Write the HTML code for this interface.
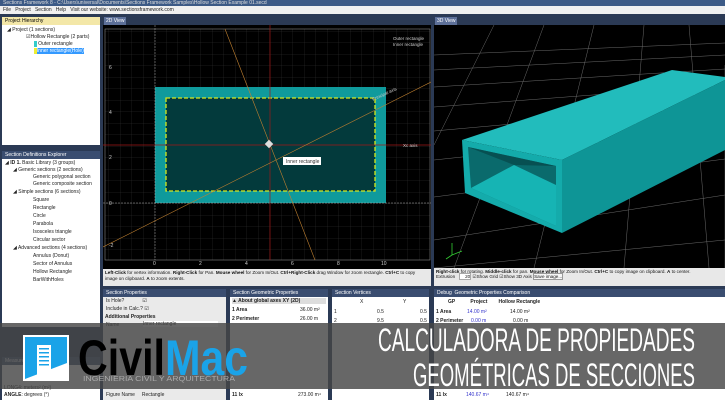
<!DOCTYPE html>
<html><head><meta charset="utf-8"><style>
*{margin:0;padding:0;box-sizing:border-box}
body{width:725px;height:400px;overflow:hidden;background:#2b3a55;font-family:"Liberation Sans",sans-serif;font-size:5px;position:relative}
.a{position:absolute}
.hdr{background:#3a4d70;color:#fff;font-size:5px;line-height:8px;padding-left:3px}
.hdrY{background:#f3e7a8;color:#000;font-size:5px;line-height:8px;padding-left:3px}
.w{background:#fff}
.t{font-size:5px;color:#222;white-space:nowrap}
</style></head><body>
<div class="a" style="left:0;top:0;width:725px;height:6px;background:#3c5a86"></div>
<div class="a t" style="left:3px;top:0;color:#ddd;font-size:5px">Sections Framework 8 - C:\Users\universal\Documents\Sections Framework Samples\Hollow Section Example 01.secd</div>
<div class="a" style="left:0;top:6px;width:725px;height:8px;background:#f0f0f0"></div>
<div class="a t" style="left:3px;top:7px">File &nbsp; Project &nbsp; Section &nbsp; Help &nbsp; Visit our website: www.sectionsframework.com</div>
<div class="a" style="left:0;top:14px;width:725px;height:3px;background:#2b3a55"></div>
<div class="a hdrY" style="left:2px;top:17px;width:98px">Project Hierarchy</div>
<div class="a w" style="left:2px;top:25px;width:98px;height:120px"></div>
<div class="a t" style="left:7px;top:27px">◢ Project (1 sections)</div>
<div class="a t" style="left:26px;top:34px">☑Hollow Rectangle (2 parts)</div>
<div class="a t" style="left:34px;top:41px"><span style="background:#3cc">&nbsp;&nbsp;</span> Outer rectangle</div>
<div class="a t" style="left:34px;top:48px;background:#39f;color:#fff"><span style="background:#ee3">&nbsp;&nbsp;</span>Inner rectangle(Hole)</div>
<div class="a hdr" style="left:2px;top:151px;width:98px">Section Definitions Explorer</div>
<div class="a w" style="left:2px;top:159px;width:98px;height:168px"></div>
<div class="a t" style="left:5px;top:160px">◢ <b>ID 1.</b> Basic Library (3 groups)</div>
<div class="a t" style="left:13px;top:167px">◢ Generic sections (2 sections)</div>
<div class="a t" style="left:33px;top:174px">Generic polygonal section</div>
<div class="a t" style="left:33px;top:181px">Generic composite section</div>
<div class="a t" style="left:13px;top:189px">◢ Simple sections (6 sections)</div>
<div class="a t" style="left:33px;top:197px">Square</div>
<div class="a t" style="left:33px;top:205px">Rectangle</div>
<div class="a t" style="left:33px;top:213px">Circle</div>
<div class="a t" style="left:33px;top:221px">Parabola</div>
<div class="a t" style="left:33px;top:229px">Isosceles triangle</div>
<div class="a t" style="left:33px;top:237px">Circular sector</div>
<div class="a t" style="left:13px;top:245px">◢ Advanced sections (4 sections)</div>
<div class="a t" style="left:33px;top:253px">Annulus (Donut)</div>
<div class="a t" style="left:33px;top:261px">Sector of Annulus</div>
<div class="a t" style="left:33px;top:269px">Hollow Rectangle</div>
<div class="a t" style="left:33px;top:277px">BarWithHoles</div>
<div class="a hdr" style="left:2px;top:357px;width:98px">Measures</div>
<div class="a w" style="left:2px;top:365px;width:98px;height:35px"></div>
<div class="a t" style="left:4px;top:385px">LONG4: meters² (m²)</div>
<div class="a t" style="left:4px;top:392px"><b>ANGLE</b>: degrees (°)</div>
<div class="a" style="left:104px;top:17px;width:22px;height:8px;background:#5d7099;color:#fff;font-size:5px;line-height:8px;padding-left:2px">2D View</div>
<div class="a" style="left:103px;top:25px;width:328px;height:244px;background:#000"></div>
<svg class="a" style="left:103px;top:25px" width="328" height="244">
<defs><pattern id="g" width="11.5" height="11.5" patternUnits="userSpaceOnUse" x="52" y="-5"><path d="M11.5 0V11.5H0" fill="none" stroke="#333" stroke-width=".5"/></pattern></defs>
<rect x="2" y="4" width="325" height="231" fill="url(#g)" stroke="#888" stroke-width=".6"/>
<rect x="52" y="62" width="231" height="116" fill="#0f9a9c"/>
<rect x="63" y="73" width="209" height="93" fill="#033a3c" stroke="#d6e81c" stroke-width="1.3" stroke-dasharray="4 2"/>
<line x1="0" y1="178" x2="328" y2="178" stroke="#aaa" stroke-width=".5" stroke-dasharray="2 1"/>
<line x1="52" y1="0" x2="52" y2="235" stroke="#aaa" stroke-width=".5" stroke-dasharray="2 1"/>
<line x1="167" y1="0" x2="167" y2="235" stroke="#a01818" stroke-width=".7"/>
<line x1="0" y1="120" x2="328" y2="120" stroke="#a01818" stroke-width=".7"/>
<line x1="122" y1="4" x2="212" y2="235" stroke="#c08030" stroke-width=".6"/>
<line x1="0" y1="222" x2="328" y2="57" stroke="#c08030" stroke-width=".6"/>
<rect x="163" y="116" width="6" height="6" fill="#ddd" transform="rotate(45 166 119)"/>
<rect x="180" y="132" width="38" height="8" fill="#fff"/>
<text x="183" y="138" font-size="5" fill="#333" font-family="Liberation Sans">Inner rectangle</text>
<text x="290" y="15" font-size="4.5" fill="#ccc" font-family="Liberation Sans">Outer rectangle</text>
<text x="290" y="21" font-size="4.5" fill="#ccc" font-family="Liberation Sans">Inner rectangle</text>
<text x="270" y="76" font-size="4.5" fill="#ccc" font-family="Liberation Sans" transform="rotate(-25 270 76)">Principal axis</text>
<text x="300" y="122" font-size="4.5" fill="#ccc" font-family="Liberation Sans">Xc axis</text>
<g font-size="5" fill="#ccc" font-family="Liberation Sans"><text x="50" y="240">0</text><text x="96" y="240">2</text><text x="142" y="240">4</text><text x="188" y="240">6</text><text x="234" y="240">8</text><text x="278" y="240">10</text><text x="6" y="180">0</text><text x="6" y="222">-2</text><text x="6" y="134">2</text><text x="6" y="89">4</text><text x="6" y="44">6</text></g>
</svg>
<div class="a" style="left:103px;top:269px;width:328px;height:17px;background:#e8e8e8;font-size:4.6px;line-height:6px;padding:1px 2px;color:#111"><b>Left-Click</b> for vertex information. <b>Right-Click</b> for Pan. <b>Mouse wheel</b> for Zoom In/Out. <b>Ctrl+Right-Click</b> drag Window for zoom rectangle. <b>Ctrl+C</b> to copy image on clipboard. <b>A</b> to zoom extents.</div>
<div class="a" style="left:435px;top:17px;width:22px;height:8px;background:#5d7099;color:#fff;font-size:5px;line-height:8px;padding-left:2px">3D View</div>
<div class="a" style="left:434px;top:25px;width:291px;height:243px;background:#000"></div>
<svg class="a" style="left:434px;top:25px" width="291" height="243">
<g stroke="#6a6a6a" stroke-width=".5" fill="none">
<path d="M0 30L291 18M0 45L291 30M0 62L291 44M0 82L291 60M0 106L291 80M0 135L291 104M0 172L291 134M0 215L291 170M0 243L291 215M60 0L0 120M110 0L20 243M160 0L100 243M210 0L190 243M255 0L275 243M291 40L291 243"/>
</g>
<polygon points="28,115 238,45 291,52 291,55 128,135" fill="#22bcbc"/>
<polygon points="128,135 291,55 291,125 128,208" fill="#0e9596"/>
<polygon points="28,115 128,135 128,208 31,168" fill="#14abab"/>
<polygon points="34,122 122,141 122,201 37,163" fill="#0a6a6c"/>
<polygon points="37,163 80,140 122,160 122,201" fill="#16b4b4"/>
<polygon points="34,122 122,141 80,140" fill="#075052"/>
<path d="M18 230V218M18 230L28 226M18 230L12 234" stroke="#3c3" stroke-width=".8"/>
</svg>
<div class="a" style="left:434px;top:268px;width:291px;height:18px;background:#e8e8e8;font-size:4.6px;padding:1px 2px;color:#111"><b>Right-click</b> for rotating. <b>Middle-click</b> for pan. <b>Mouse wheel</b> for Zoom In/Out. <b>Ctrl+C</b> to copy image on clipboard. <b>A</b> to center.<br>Extrusion &nbsp; <span style="background:#fff;border:1px solid #aaa">&nbsp;&nbsp;&nbsp;&nbsp;20</span> ☑Show Grid ☑Show 3D Axis <span style="border:1px solid #999;background:#f6f6f6">Save image...</span></div>
<div class="a hdr" style="left:103px;top:289px;width:123px">Section Properties</div>
<div class="a" style="left:103px;top:297px;width:123px;height:103px;background:#eaeaea"></div>
<div class="a t" style="left:106px;top:298px">Is Hole? &nbsp;&nbsp;&nbsp;&nbsp;&nbsp;&nbsp;&nbsp;&nbsp;&nbsp;&nbsp;&nbsp;&nbsp;☑</div>
<div class="a t" style="left:106px;top:306px">Include in Calc.? ☑</div>
<div class="a t" style="left:105px;top:314px"><b>Additional Properties</b></div>
<div class="a t" style="left:106px;top:322px">Name</div><div class="a t" style="left:143px;top:321px;width:75px;background:#fff">Inner rectangle</div>
<div class="a t" style="left:106px;top:392px">Figure Name &nbsp;&nbsp;&nbsp;&nbsp;Rectangle</div>
<div class="a hdr" style="left:230px;top:289px;width:98px">Section Geometric Properties</div>
<div class="a w" style="left:230px;top:297px;width:98px;height:103px"></div>
<div class="a t" style="left:232px;top:298px;width:94px;background:#ddd"><b>▲ About global axes XY (2D)</b></div>
<div class="a t" style="left:232px;top:307px"><b>1 Area</b></div><div class="a t" style="left:300px;top:307px">36.00 m²</div>
<div class="a t" style="left:232px;top:316px"><b>2 Perimeter</b></div><div class="a t" style="left:300px;top:316px">26.00 m</div>
<div class="a t" style="left:232px;top:392px"><b>11 Ix</b></div><div class="a t" style="left:298px;top:392px">273.00 m⁴</div>
<div class="a hdr" style="left:332px;top:289px;width:97px">Section Vertices</div>
<div class="a w" style="left:332px;top:297px;width:97px;height:103px"></div>
<div class="a t" style="left:360px;top:299px">X</div><div class="a t" style="left:403px;top:299px">Y</div>
<div class="a t" style="left:334px;top:309px">1</div><div class="a t" style="left:377px;top:309px">0.5</div><div class="a t" style="left:420px;top:309px">0.5</div>
<div class="a t" style="left:334px;top:318px">2</div><div class="a t" style="left:377px;top:318px">9.5</div><div class="a t" style="left:420px;top:318px">0.5</div>
<div class="a hdr" style="left:434px;top:289px;width:291px">Debug &nbsp;Geometric Properties Comparison</div>
<div class="a w" style="left:434px;top:297px;width:291px;height:103px"></div>
<div class="a t" style="left:448px;top:299px"><b>GP &nbsp;&nbsp;&nbsp;&nbsp;&nbsp;&nbsp;&nbsp;&nbsp;&nbsp;&nbsp;Project &nbsp;&nbsp;&nbsp;&nbsp;&nbsp;&nbsp;&nbsp;Hollow Rectangle</b></div>
<div class="a t" style="left:436px;top:309px"><b>1 Area</b></div><div class="a t" style="left:467px;top:309px;color:#33c">14.00 m²</div><div class="a t" style="left:510px;top:309px">14.00 m²</div>
<div class="a t" style="left:436px;top:318px"><b>2 Perimeter</b></div><div class="a t" style="left:471px;top:318px;color:#33c">0.00 m</div><div class="a t" style="left:513px;top:318px">0.00 m</div>
<div class="a t" style="left:436px;top:392px"><b>11 Ix</b></div><div class="a t" style="left:466px;top:392px;color:#33c">140.67 m⁴</div><div class="a t" style="left:506px;top:392px">140.67 m⁴</div>
<div class="a" style="left:0;top:323px;width:725px;height:66px;background:rgba(70,70,70,.82)"></div>
<div class="a" style="left:23px;top:335px;width:46px;height:46px;background:#1aa3e8;border:2px solid #fff"></div>
<svg class="a" style="left:25px;top:337px" width="42" height="42"><rect x="12" y="8" width="14" height="30" fill="#fff"/><g fill="#1aa3e8"><rect x="14" y="11" width="10" height="1.5"/><rect x="14" y="15" width="10" height="1.5"/><rect x="14" y="19" width="10" height="1.5"/><rect x="14" y="23" width="10" height="1.5"/><rect x="14" y="27" width="10" height="1.5"/></g><polygon points="0,42 42,26 42,42" fill="#fff"/></svg>
<svg class="a" style="left:0;top:323px" width="725" height="66">
<text x="78" y="52" font-family="Liberation Sans" font-weight="bold" font-size="50" textLength="87" lengthAdjust="spacingAndGlyphs" fill="#000">Civil</text>
<text x="165" y="52" font-family="Liberation Sans" font-weight="bold" font-size="50" textLength="83" lengthAdjust="spacingAndGlyphs" fill="#1aa3e8">Mac</text>
<text x="83" y="58" font-family="Liberation Sans" font-size="7" textLength="152" lengthAdjust="spacingAndGlyphs" fill="#aaa">INGENIERIA CIVIL Y ARQUITECTURA</text>
<text x="378" y="28" font-family="Liberation Sans" font-size="32" textLength="317" lengthAdjust="spacingAndGlyphs" fill="#fff">CALCULADORA DE PROPIEDADES</text>
<text x="413" y="63" font-family="Liberation Sans" font-size="32" textLength="282" lengthAdjust="spacingAndGlyphs" fill="#fff">GEOMÉTRICAS DE SECCIONES</text>
</svg>
</body></html>
